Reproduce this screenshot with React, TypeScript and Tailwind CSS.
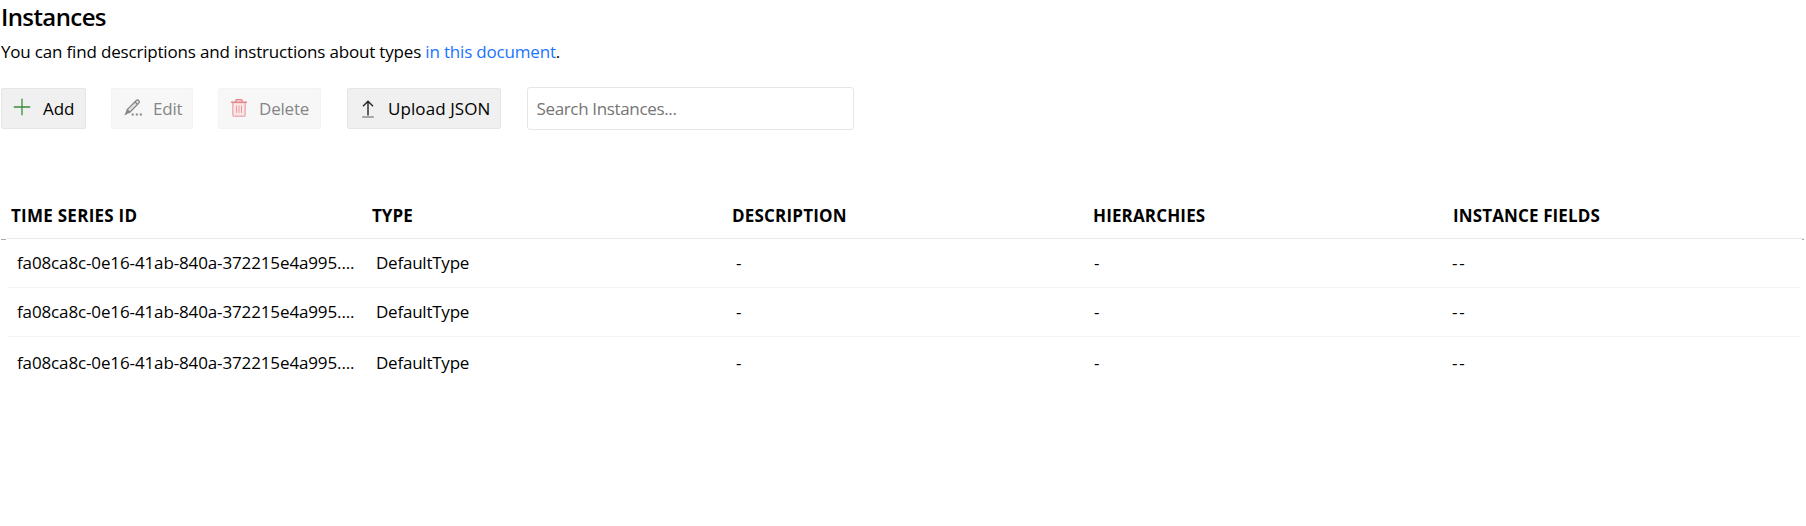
import type { ReactNode } from "react";

const headers = [
  { label: "TIME SERIES ID", style: "-ml-px tracking-[0.26px]" },
  { label: "TYPE", style: "" },
  { label: "DESCRIPTION", style: "-ml-px tracking-[0.2px]" },
  { label: "HIERARCHIES", style: "-ml-px tracking-[0.15px]" },
  { label: "INSTANCE FIELDS", style: "-ml-px tracking-[0.13px]" },
];
const rows = [
  { id: "fa08ca8c-0e16-41ab-840a-372215e4a995....", style: "h-[49px] border-b border-[#f3f3f3] pt-[13px]" },
  { id: "fa08ca8c-0e16-41ab-840a-372215e4a995....", style: "h-[49px] border-b border-[#f3f3f3] pt-[13px]" },
  { id: "fa08ca8c-0e16-41ab-840a-372215e4a995....", style: "h-[52px] pt-[15px]" },
];

function Button({ children, className, disabled }: { children: ReactNode; className: string; disabled?: boolean }) {
  return (
    <button
      disabled={disabled}
      className={`flex h-[41px] shrink-0 items-center rounded-xs border text-left text-[17px] whitespace-nowrap ${
        disabled ? "border-[#f3f3f3] bg-[#f7f7f7] text-[#858585]" : "border-[#e6e6e6] bg-[#f0f0f0] text-black"
      } ${className}`}
    >
      {children}
    </button>
  );
}

function PlusIcon() {
  return (
    <svg className="mr-[12px] -mt-[3px] shrink-0" width="18" height="18" fill="none" stroke="#3b8a3b" strokeWidth="1.3">
      <path d="M9 .8v16.4M.8 9h16.4" />
    </svg>
  );
}

function EditIcon() {
  return (
    <svg className="mr-[11px] -mt-[2px] shrink-0" width="18" height="18" fill="none" stroke="#858585" strokeWidth="1.3">
      <path d="M3.2 10.6L12.3 1.5q1.1-1 2.4.1 1.2 1.2.1 2.5L5.8 13.3z" fill="#e2e2e2" />
      <path d="M11 2.9l2.6 2.6" />
      <path d="M.3 16.6l2.6-6.2 3.2 3.2z" fill="#858585" stroke="none" />
      <path d="M7.7 15.6h2M11.8 15.6h2M15.8 15.6h2" strokeWidth="2" />
    </svg>
  );
}

function TrashIcon() {
  return (
    <svg className="mr-[12px] -mt-[1px] shrink-0" width="16" height="18" fill="none" stroke="#ea9ca1" strokeWidth="1.5">
      <path d="M1.8 3.5v12.4q0 1.3 1.3 1.3h9.8q1.3 0 1.3-1.3V3.5z" fill="#f9e6e7" stroke="#eeb0b4" />
      <path d="M0 3.3h16M5 3V1.5q0-.8.8-.8h4.4q.8 0 .8.8V3" stroke="#e78a90" />
      <path d="M5.5 6.5v7.5M8 6.5v7.5M10.5 6.5v7.5" strokeWidth="1" />
    </svg>
  );
}

function UploadIcon() {
  return (
    <svg className="mr-[14px] shrink-0" width="12" height="18" fill="none">
      <path d="M6 1.2v14.3M1 6.3l5-5 5 5" stroke="#222" strokeWidth="1.4" />
      <path d="M.2 17h11.6" stroke="#777" strokeWidth="1.2" />
    </svg>
  );
}

export default function App() {
  return (
    <main className="h-[526px] w-[1806px] overflow-hidden bg-white font-['Open_Sans','Noto_Sans',sans-serif] text-black">
      <h1 className="ml-px h-[40px] pt-[1px] text-[24px] leading-[32px] font-semibold tracking-[-0.6px]">Instances</h1>
      <p className="ml-px h-[47px] text-[17px] leading-[24px] tracking-[-0.18px] whitespace-nowrap">
        You can find descriptions and instructions about types <a className="text-[#1a73ff]">in this document</a>.
      </p>
      <div className="flex items-center pl-px">
        <Button className="w-[85px] pl-[11px] tracking-[-0.1px]"><PlusIcon />Add</Button>
        <Button disabled className="ml-[25px] w-[82px] pl-[12px] tracking-[-0.2px]"><EditIcon />Edit</Button>
        <Button disabled className="ml-[25px] w-[103px] pl-[12px] tracking-[-0.2px]"><TrashIcon />Delete</Button>
        <Button className="ml-[26px] w-[154px] pl-[14px] tracking-[0.08px]"><UploadIcon />Upload JSON</Button>
        <input
          placeholder="Search Instances..."
          className="ml-[26px] h-[43px] w-[327px] rounded-[3px] border border-[#e6e6e6] bg-white pl-[8.5px] text-[17px] tracking-[-0.35px] placeholder:text-[#757575]"
        />
      </div>
      <section className="mt-[64px]">
        <div className="ml-[7px] grid h-[45px] w-[1797px] grid-cols-[360px_361px_361px_360px_1fr] border-b border-[#e9e9e9] pt-[10px] pl-[5px] text-[17px] leading-[24px] font-bold">
          {headers.map((h) => (
            <span key={h.label} className={h.style}>{h.label}</span>
          ))}
        </div>
        <div className="mr-[2px] ml-px flex h-px justify-between">
          <i className="w-[5px] bg-[#a8a8a8]" />
          <i className="w-[2px] bg-[#a8a8a8]" />
        </div>
        <div className="-mt-px ml-[7px] w-[1794px]">
          {rows.map((r, i) => (
            <div
              key={i}
              className={`grid grid-cols-[359px_359px_358px_359px_1fr] pl-[10px] text-[17px] leading-[22px] whitespace-nowrap ${r.style}`}
            >
              <span className="tracking-[-0.13px]">{r.id}</span>
              <span className="tracking-[-0.23px]">DefaultType</span>
              <span className="pl-px">-</span>
              <span className="pl-px">-</span>
              <span className="tracking-[1.8px]">--</span>
            </div>
          ))}
        </div>
      </section>
    </main>
  );
}
